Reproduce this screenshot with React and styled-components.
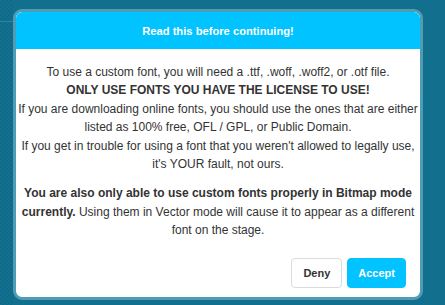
import React from "react";
import styled, { createGlobalStyle } from "styled-components";

const Global = createGlobalStyle`
  html, body { margin: 0; padding: 0; }
  body {
    width: 445px;
    height: 305px;
    overflow: hidden;
    background: #116f8e;
    font-family: "Liberation Sans", Arial, sans-serif;
  }
`;

const Stage = styled.div`
  width: 445px;
  height: 305px;
  box-sizing: border-box;
  padding: 9px 22px 5px 13px;
  background:
    linear-gradient(#2c84a0, #2c84a0) 0 21px / 13px 1px no-repeat,
    repeating-conic-gradient(#0f6a89 0 25%, #13708f 0 50%) 0 0 / 4px 4px;
  background-color: #116f8e;
  position: relative;
`;

const RightBg = styled.div`
  position: absolute;
  inset: 0 0 0 13px;
  background: #126f8e;
  z-index: 0;
`;

const Modal = styled.div`
  position: relative;
  z-index: 1;
  width: 410px;
  height: 291px;
  box-sizing: border-box;
  border: 3px solid #4e9db5;
  border-radius: 9px;
  overflow: hidden;
  background: #fff;
  display: flex;
  flex-direction: column;
`;

const Header = styled.div`
  height: 37px;
  flex-shrink: 0;
  background: #00c3ff;
  color: #fff;
  font-weight: bold;
  font-size: 11.2px;
  display: flex;
  align-items: center;
  justify-content: center;
  border-radius: 6px 6px 0 0;
`;

const Body = styled.div`
  flex: 1;
  padding: 14px 1px 0;
  text-align: center;
  color: #333;
  font-size: 12px;
  line-height: 18.4px;
`;

const Para = styled.p`
  margin: 0 0 ${(p) => p.$gap || 0}px;
`;

const Footer = styled.div`
  display: flex;
  justify-content: flex-end;
  gap: 5px;
  padding: 0 14px 9px;
`;

const Button = styled.button`
  height: 30px;
  box-sizing: border-box;
  padding: 0 ${(p) => (p.$primary ? 10 : 11)}px;
  border-radius: 4px;
  border: 1px solid ${(p) => (p.$primary ? "#00c3ff" : "#dcdcdc")};
  background: ${(p) => (p.$primary ? "#00c3ff" : "#fff")};
  color: ${(p) => (p.$primary ? "#fff" : "#333")};
  font-family: "Liberation Sans", Arial, sans-serif;
  font-weight: bold;
  font-size: 11px;
  cursor: pointer;
`;

export default function App() {
  return (
    <>
      <Global />
      <Stage>
        <RightBg />
        <Modal>
          <Header>Read this before continuing!</Header>
          <Body>
            <Para $gap={11}>
              To use a custom font, you will need a .ttf, .woff, .woff2, or .otf file.
              <br />
              <b>ONLY USE FONTS YOU HAVE THE LICENSE TO USE!</b>
              <br />
              If you are downloading online fonts, you should use the ones that are either
              listed as 100% free, OFL / GPL, or Public Domain.
              <br />
              If you get in trouble for using a font that you weren't allowed to legally use,
              it's YOUR fault, not ours.
            </Para>
            <Para>
              <b>You are also only able to use custom fonts properly in Bitmap mode currently.</b>{" "}
              Using them in Vector mode will cause it to appear as a different font on the stage.
            </Para>
          </Body>
          <Footer>
            <Button>Deny</Button>
            <Button $primary>Accept</Button>
          </Footer>
        </Modal>
      </Stage>
    </>
  );
}
